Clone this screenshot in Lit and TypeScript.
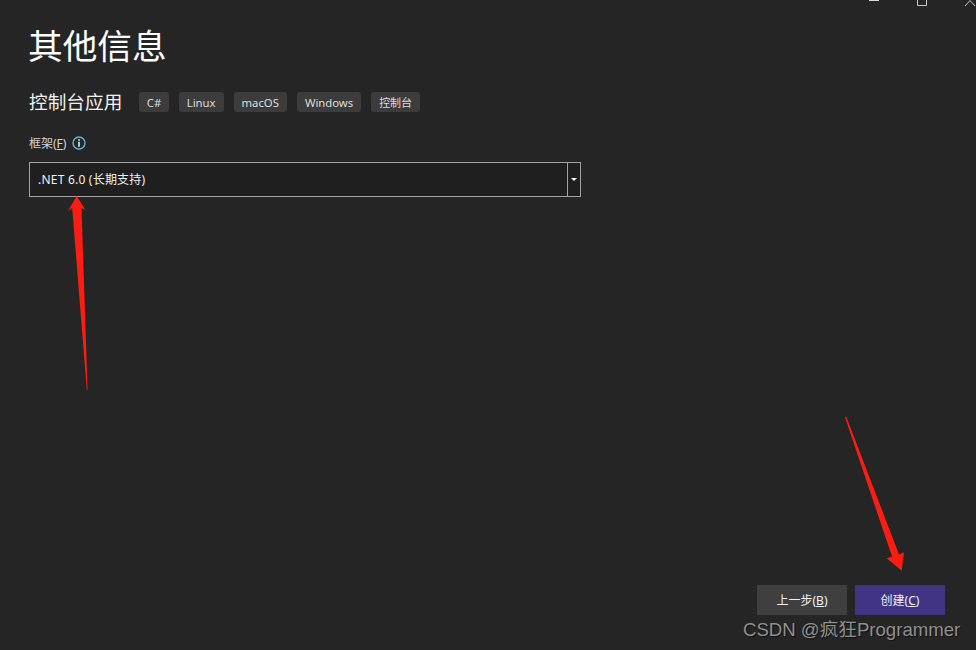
import { LitElement, html, css, svg } from "lit";
import { customElement } from "lit/decorators.js";

@customElement("app-root")
export class AppRoot extends LitElement {
  static styles = css`
    :host {
      display: block;
      position: relative;
      height: 650px;
      overflow: hidden;
      background: #252526;
      color: #f1f1f1;
      font-family: "Noto Sans", "Noto Sans CJK SC", sans-serif;
    }
    .page {
      box-sizing: border-box;
      height: 650px;
      display: flex;
      flex-direction: column;
      padding: 21px 31px 35px 29px;
    }
    h1 {
      margin: 0 0 0 -1px;
      font-size: 34.67px;
      line-height: 50px;
      font-weight: 400;
      color: #ffffff;
    }
    .sub {
      display: flex;
      align-items: center;
      margin-top: 21px;
      height: 20px;
    }
    .sub-title {
      font-size: 18.67px;
      line-height: 20px;
      color: #f1f1f1;
      margin-right: 17px;
    }
    .tags {
      display: flex;
      gap: 10px;
    }
    .tag {
      height: 20px;
      box-sizing: border-box;
      padding: 0 8px;
      display: flex;
      align-items: center;
      background: #3c3c3d;
      border-radius: 3px;
      font-size: 11.3px;
      color: #dcdcdc;
    }
    .tag:first-child {
      padding: 0 7.5px;
    }
    .tag.cjk {
      font-size: 11px;
    }
    .label-row {
      display: flex;
      align-items: center;
      gap: 6px;
      margin-top: 22px;
      height: 18px;
      font-size: 12px;
      color: #d4d4d4;
    }
    .label-row svg {
      display: block;
    }
    u {
      text-underline-offset: 1px;
    }
    .select {
      display: flex;
      width: 552px;
      height: 35px;
      box-sizing: border-box;
      margin-top: 10px;
      border: 1px solid #a3a3a3;
      background: #1f1f1f;
    }
    .value {
      flex: 1;
      display: flex;
      align-items: center;
      padding-left: 8px;
      padding-bottom: 1px;
      font-size: 12px;
      letter-spacing: 0.22px;
      color: #f1f1f1;
      border-right: 1px solid #a3a3a3;
    }
    .drop {
      width: 12px;
      display: flex;
      align-items: center;
      justify-content: center;
    }
    .caret {
      width: 0;
      height: 0;
      border-left: 3px solid transparent;
      border-right: 3px solid transparent;
      border-top: 3px solid #ffffff;
    }
    .footer {
      margin-top: auto;
      display: flex;
      justify-content: flex-end;
      gap: 8px;
    }
    .btn {
      width: 90px;
      height: 30px;
      display: flex;
      align-items: center;
      justify-content: center;
      background: #3f3f40;
      font-size: 12px;
      color: #f1f1f1;
    }
    .btn.primary {
      background: #423485;
    }
    .watermark {
      position: absolute;
      left: 743px;
      top: 618px;
      font-size: 18.6px;
      line-height: 24px;
      color: #8f8f8f;
      text-shadow: 1px 1px 1px #111;
      white-space: nowrap;
      font-family: "Liberation Sans", "Noto Sans CJK SC", sans-serif;
    }
    .overlay {
      position: absolute;
      inset: 0;
      width: 976px;
      height: 650px;
      pointer-events: none;
    }
  `;

  private tags = ["C#", "Linux", "macOS", "Windows"];

  render() {
    return html`
      <div class="page">
        <h1>其他信息</h1>
        <div class="sub">
          <div class="sub-title">控制台应用</div>
          <div class="tags">
            ${this.tags.map((t) => html`<div class="tag">${t}</div>`)}
            <div class="tag cjk">控制台</div>
          </div>
        </div>
        <div class="label-row">
          <span>框架(<u>F</u>)</span>
          <svg width="14" height="14" viewBox="0 0 14 14">
            <circle cx="7" cy="7" r="6" fill="none" stroke="#5bb8dc" stroke-width="1.4"></circle>
            <rect x="6.2" y="3.2" width="1.6" height="1.6" fill="#e8e8e8"></rect>
            <rect x="6.2" y="5.8" width="1.6" height="5" fill="#e8e8e8"></rect>
          </svg>
        </div>
        <div class="select">
          <div class="value">.NET 6.0 (长期支持)</div>
          <div class="drop"><div class="caret"></div></div>
        </div>
        <div class="footer">
          <div class="btn">上一步(<u>B</u>)</div>
          <div class="btn primary">创建(<u>C</u>)</div>
        </div>
      </div>
      <svg class="overlay" viewBox="0 0 976 650">
        ${svg`
          <rect x="869" y="0" width="10" height="1" fill="#d8d8d8"></rect>
          <path d="M917.5 0V5.5H926.5V0" fill="none" stroke="#c8c8c8"></path>
          <path d="M965 6L970 0.5L975 6" fill="none" stroke="#c8c8c8"></path>
          <polygon fill="#fb1c12" points="76.7,196 85.5,210 81.5,208 87.6,390 86.8,390 72.2,208 68,211"></polygon>
          <polygon fill="#fb1c12" points="845,417.3 846.3,416.7 899,554.5 904,552.3 901.7,570.7 886.7,558.3 892,556.5"></polygon>
        `}
      </svg>
      <div class="watermark">CSDN @疯狂Programmer</div>
    `;
  }
}
